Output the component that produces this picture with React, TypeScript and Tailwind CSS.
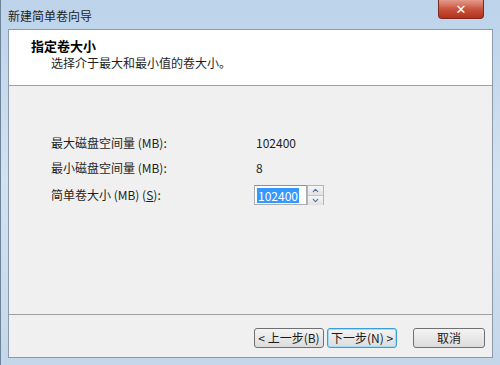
import { ChevronUp, ChevronDown } from 'lucide-react';

const font = { fontFamily: '"Noto Sans CJK SC", "DejaVu Sans", sans-serif' };

function WinButton({ label, focused, wide }: { label: string; focused?: boolean; wide?: boolean }) {
  return (
    <button
      className={
        'h-[20px] rounded-[3px] border text-[12px] leading-none text-[#1a1a1a] bg-gradient-to-b from-[#f4f4f4] to-[#dcdcdc] ' +
        (focused ? 'border-[#3c9fd6] shadow-[inset_0_0_0_1px_#9fdcf7] ' : 'border-[#707070] ') +
        (wide ? 'w-[72px]' : 'w-[70px]')
      }
    >
      {label}
    </button>
  );
}

export default function App() {
  return (
    <div
      className="w-[500px] h-[365px] flex flex-col bg-gradient-to-b from-[#bcd3ea] via-[#d3e2f1] to-[#c4d7ea] border-l border-[#6f8398]"
      style={font}
    >
      {/* title bar */}
      <div className="h-[29px] flex items-start shrink-0">
        <div className="pl-[7px] pt-[7px] text-[12px] text-[#1e1e1e]">新建简单卷向导</div>
        <div className="ml-auto mr-[16px] w-[46px] h-[19px] rounded-b-[4px] border border-t-0 border-[#7a2a20] bg-gradient-to-b from-[#e49a8b] via-[#c9543e] to-[#b2301c] flex items-center justify-center">
          <span className="text-white font-bold text-[13px] leading-none" style={{ fontFamily: '"DejaVu Sans", sans-serif' }}>✕</span>
        </div>
      </div>

      {/* client area */}
      <div className="flex-1 mx-[7px] mb-[7px] border border-[#8a9aab] bg-[#f0f0f0] flex flex-col">
        <div className="h-[56px] bg-white border-b border-[#a0a0a0] pl-[22px] pt-[7px] shrink-0">
          <div className="text-[13px] font-bold text-black leading-[18px]">指定卷大小</div>
          <div className="pl-[20px] text-[12px] text-[#1e1e1e] leading-[16px]">选择介于最大和最小值的卷大小。</div>
        </div>

        <div className="flex-1 pl-[42px] pt-[49px] text-[12px] text-[#1e1e1e]">
          <div className="grid grid-cols-[203px_auto] gap-y-[9px] items-center">
            <div className="h-[16px] leading-[16px]">最大磁盘空间量 (MB):</div>
            <div className="h-[16px] leading-[16px] pl-[2px]">102400</div>
            <div className="h-[16px] leading-[16px]">最小磁盘空间量 (MB):</div>
            <div className="h-[16px] leading-[16px] pl-[2px]">8</div>
            <div className="h-[16px] leading-[16px]">简单卷大小 (MB) (<span className="underline">S</span>):</div>
            <div className="flex items-center">
              <div className="w-[53px] h-[20px] border border-[#abadb3] border-t-[#5a9bd0] bg-white flex items-center pl-[2px]">
                <span className="bg-[#3399ff] text-white leading-[15px] px-[1px]">102400</span>
              </div>
              <div className="flex flex-col h-[20px] w-[17px] border border-[#b5b5b5] bg-[#ececec]">
                <div className="flex-1 flex items-center justify-center border-b border-[#c5c5c5] bg-gradient-to-b from-[#f6f6f6] to-[#e2e2e2]">
                  <ChevronUp size={9} strokeWidth={3} color="#4b6fa8" />
                </div>
                <div className="flex-1 flex items-center justify-center bg-gradient-to-b from-[#f6f6f6] to-[#e2e2e2]">
                  <ChevronDown size={9} strokeWidth={3} color="#4b6fa8" />
                </div>
              </div>
            </div>
          </div>
        </div>

        <div className="h-[43px] border-t border-[#a0a0a0] shrink-0 flex items-start pt-[13px] pl-[245px] gap-[3px]">
          <WinButton label="< 上一步(B)" />
          <WinButton label="下一步(N) >" focused />
          <div className="w-[10px]" />
          <WinButton label="取消" wide />
        </div>
      </div>
    </div>
  );
}
